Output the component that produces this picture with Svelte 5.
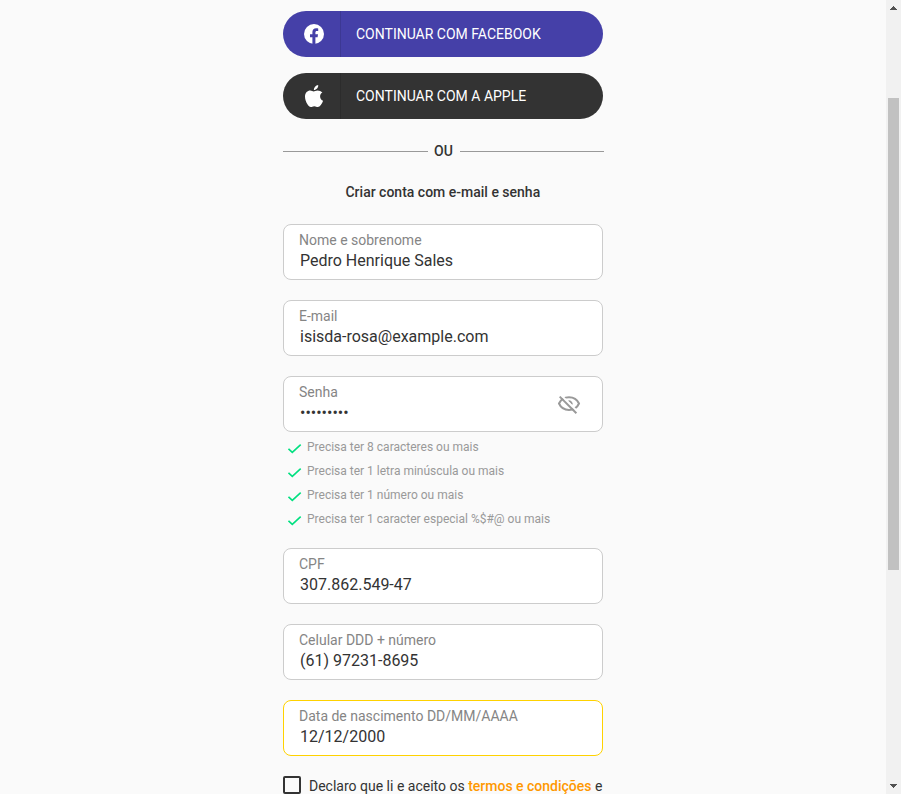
<script>
  const accountFields = [
    { label: 'Nome e sobrenome', value: 'Pedro Henrique Sales' },
    { label: 'E-mail', value: 'isisda-rosa@example.com' },
    { label: 'Senha', value: '•••••••••', secret: true }
  ];
  const rules = [
    'Precisa ter 8 caracteres ou mais',
    'Precisa ter 1 letra minúscula ou mais',
    'Precisa ter 1 número ou mais',
    'Precisa ter 1 caracter especial %$#@ ou mais'
  ];
  const personalFields = [
    { label: 'CPF', value: '307.862.549-47' },
    { label: 'Celular DDD + número', value: '(61) 97231-8695' },
    { label: 'Data de nascimento DD/MM/AAAA', value: '12/12/2000', active: true }
  ];
</script>

{#snippet field(f)}
  <div class="field" class:active={f.active}>
    <div class="content">
      <span class="label">{f.label}</span>
      <span class="value">{f.value}</span>
    </div>
    {#if f.secret}
      <svg width="24" height="24" viewBox="0 0 24 24" fill="none" stroke="#999" stroke-width="2">
        <path d="M2 11.500C3.700 7.700 7.400 5.200 12 5.200s8.300 2.500 10 6.300C20.300 15.300 16.600 17.900 12 17.900S3.700 15.300 2 11.500z" />
        <path d="M11.500 9.300a3 3 0 0 1 3.300 3.200" />
        <path stroke="#fff" d="M4.100 3.200 20.700 19.800" />
        <path d="M2.700 4.600 19.400 21.300" />
      </svg>
    {/if}
  </div>
{/snippet}

<div class="page">
  <main>
    <form>
      <button type="button" class="social facebook">
        <span class="icon">
          <svg width="20" height="20" viewBox="0 0 20 20">
            <circle cx="10" cy="10" r="10" fill="#fff" />
            <path d="M8.400 20v-6.800H6v-2.900h2.400V8.100c0-2.500 1.500-3.900 3.700-3.900.8 0 1.600.1 2.100.2V7h-1.300c-1.100 0-1.500.7-1.500 1.400v1.900H14l-.4 2.900h-2.200V20z" fill="#4540a8" />
          </svg>
        </span>
        <span class="caption">CONTINUAR COM FACEBOOK</span>
      </button>
      <button type="button" class="social apple">
        <span class="icon">
          <svg width="20" height="22" viewBox="0 0 20 22" fill="#fff">
            <path d="M18.400 7.500C17.200 8.200 16.100 9.400 16.100 11.400c0 2.300 1.400 3.700 3 4.300-.5 1.500-1.300 2.900-2.300 4.300-.9 1.200-1.800 2-3 2-1.300 0-1.800-.8-3.500-.8s-2.300.8-3.500.8c-1.300 0-2.300-1.200-3.200-2.500C2.100 17.400 1 14.500 1 11.800c0-4 2.600-6.200 5.200-6.200 1.400 0 2.600.9 3.500.9.800 0 2.200-1 3.800-1 1.700 0 3.700.7 4.900 2z" />
            <path d="M9.900 5C9.700 2.500 11.900.3 14.200 0 14.600 2.600 12.100 5.100 9.900 5z" />
          </svg>
        </span>
        <span class="caption">CONTINUAR COM A APPLE</span>
      </button>

      <div class="divider"><i></i><span>OU</span><i></i></div>
      <h2>Criar conta com e-mail e senha</h2>

      <div class="fields">
        {#each accountFields as f}{@render field(f)}{/each}
      </div>
      <ul>
        {#each rules as rule}
          <li>
            <svg width="14" height="10" viewBox="0 0 14 10" fill="none" stroke="#00e080" stroke-width="1.6">
              <path d="M.5 4.800 4.300 8.400 12.700.6" />
            </svg>
            <span>{rule}</span>
          </li>
        {/each}
      </ul>
      <div class="fields">
        {#each personalFields as f}{@render field(f)}{/each}
      </div>

      <div class="terms">
        <span class="box"></span>
        <span class="text">Declaro que li e aceito os <b>termos e condições</b> e</span>
      </div>
    </form>
  </main>

  <div class="scrollbar">
    <svg width="7" height="4" viewBox="0 0 7 4" fill="#505050" shape-rendering="crispEdges"><path d="M3 0h1v1h1v1h1v1h1v1H0V3h1V2h1V1h1z" /></svg>
    <div class="thumb"></div>
    <svg width="7" height="4" viewBox="0 0 7 4" fill="#505050" shape-rendering="crispEdges"><path d="M0 0h7v1H6v1H5v1H4v1H3V3H2V2H1V1H0z" /></svg>
  </div>
</div>

<style>
  :global(body) {
    margin: 0;
    overflow: hidden;
  }
  .page {
    display: flex;
    height: 794px;
    overflow: hidden;
    background: #fafafa;
    color: #333;
    font-family: Roboto, sans-serif;
    font-size: 14px;
  }
  main {
    width: 886px;
    overflow: hidden;
  }
  form {
    width: 320px;
    margin: 0 auto;
    padding-top: 11px;
  }
  .social {
    display: flex;
    align-items: center;
    width: 320px;
    height: 46px;
    margin: 0 0 16px;
    padding: 0;
    border: 0;
    border-radius: 23px;
    overflow: hidden;
    color: #fff;
    font: 400 14px/20px Roboto, sans-serif;
  }
  .facebook {
    background: #4540a8;
  }
  .apple {
    background: #333;
  }
  .icon {
    display: flex;
    align-items: center;
    justify-content: center;
    box-sizing: border-box;
    width: 58px;
    height: 46px;
    padding-left: 5px;
    border-right: 1px solid rgba(0, 0, 0, 0.12);
  }
  .caption {
    margin-left: 15px;
  }
  .divider {
    display: flex;
    align-items: center;
    height: 20px;
    margin: 22px 0 0;
    font-weight: 500;
  }
  .divider i {
    flex: none;
    width: 144.7px;
    height: 1px;
    background: #999;
  }
  .divider span {
    flex: none;
    width: 32px;
    text-align: center;
    text-indent: -0.4px;
  }
  h2 {
    margin: 21px 0 22px;
    font-size: 14px;
    line-height: 20px;
    font-weight: 500;
    text-align: center;
    text-indent: -0.3px;
  }
  .fields {
    display: flex;
    flex-direction: column;
    gap: 20px;
  }
  .field {
    display: flex;
    justify-content: space-between;
    align-items: center;
    box-sizing: border-box;
    height: 56px;
    padding: 0 21px 0 15px;
    border: 1px solid #ccc;
    border-radius: 8px;
    background: #fff;
  }
  .field.active {
    border-color: #ffd200;
  }
  .content {
    display: flex;
    flex-direction: column;
    padding-bottom: 3px;
  }
  .label {
    line-height: 20px;
    color: #858585;
  }
  .value {
    padding-left: 1px;
    font-size: 16px;
    line-height: 21px;
  }
  ul {
    margin: 3px 0 17px;
    padding: 0 0 0 5px;
    list-style: none;
  }
  li {
    display: flex;
    align-items: center;
    height: 24px;
    gap: 5px;
    color: #999;
    font-size: 12px;
  }
  li svg {
    margin-top: 4px;
  }
  .terms {
    display: flex;
    gap: 8px;
    margin-top: 20px;
    line-height: 20px;
    white-space: nowrap;
  }
  .box {
    box-sizing: border-box;
    width: 18px;
    height: 18px;
    border: 2px solid #333;
    border-radius: 2px;
  }
  b {
    font-weight: 500;
    color: #ff9800;
  }
  .scrollbar {
    display: flex;
    flex-direction: column;
    align-items: center;
    justify-content: space-between;
    box-sizing: border-box;
    width: 15px;
    padding: 6px 0;
    background: #f1f1f1;
  }
  .thumb {
    width: 11px;
    height: 472px;
    margin: 88px 0 auto;
    background: #c1c1c1;
  }
</style>
